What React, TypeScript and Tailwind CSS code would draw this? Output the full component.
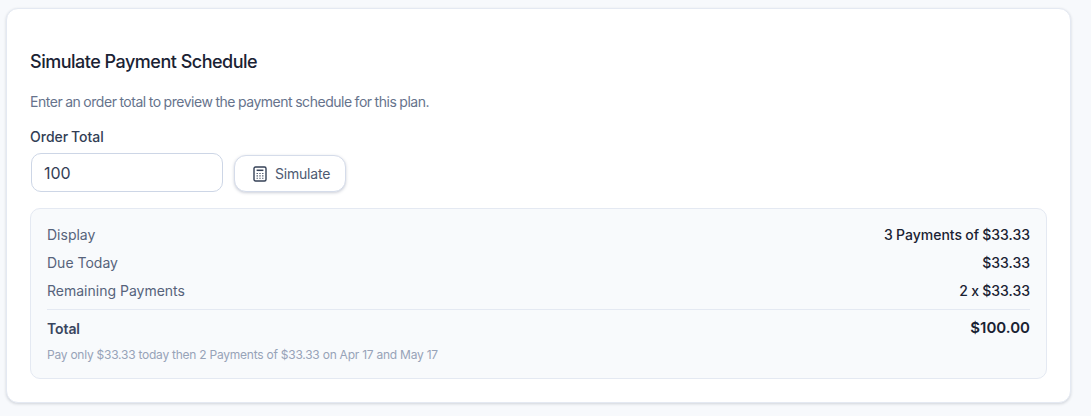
import React from 'react';

const rows = [
  { label: 'Display', value: '3 Payments of $33.33' },
  { label: 'Due Today', value: '$33.33' },
  { label: 'Remaining Payments', value: '2 x $33.33' },
];

const CalcIcon = () => (
  <svg className="h-[16px] w-[14px] text-[#344056]" viewBox="0 0 14 16" fill="none" stroke="currentColor">
    <rect x="1" y="1" width="12" height="14" rx="1.5" strokeWidth="1.4" />
    <path d="M3.6 4.3h6.8" strokeWidth="1.5" />
    <path d="M3.6 7.5h1.2M6.4 7.5h1.2M9.2 7.5h1.2M3.6 9.9h1.2M6.4 9.9h1.2M9.2 9.9h1.2M3.6 12.3h1.2M6.4 12.3h1.2M9.2 12.3h1.2" strokeWidth="1.1" />
  </svg>
);

const App: React.FC = () => {
  return (
    <div className="h-[416px] overflow-hidden bg-[#f7f9fc] pl-[6px] pr-[20px] pt-[8px] font-['Inter',sans-serif]">
      <div className="h-[395px] rounded-xl border border-[#e4e9f2] bg-white px-[23px] pt-[40px] shadow-[0_1px_3px_rgba(15,23,42,0.16)]">
        <h2 className="text-[18px] leading-[26px] font-medium tracking-[-0.5px] text-[#1a2233]">Simulate Payment Schedule</h2>
        <p className="mt-[17px] text-[14px] leading-[20px] tracking-[-0.47px] [word-spacing:-0.5px] text-[#66738c]">
          Enter an order total to preview the payment schedule for this plan.
        </p>
        <label className="mt-[15px] block text-[14px] leading-[20px] font-medium [word-spacing:-1px] text-[#323e55]">Order Total</label>
        <div className="mt-[6px] flex items-end gap-[11px] pl-px">
          <input
            readOnly
            value="100"
            className="h-[39px] w-[192px] rounded-[10px] border border-[#cdd6e6] bg-white px-3 text-[16px] text-[#344056] outline-none"
          />
          <button className="flex h-[37px] w-[112px] items-center gap-[8px] rounded-[12px] border border-[#d5dcea] bg-white pl-[18px] text-[14px] tracking-[-0.2px] text-[#4d5a72] shadow-[0_1px_3px_rgba(51,65,99,0.25)]">
            <CalcIcon />
            <span>Simulate</span>
          </button>
        </div>
        <div className="mt-[16px] h-[171px] rounded-[10px] border border-[#e4e9f2] bg-[#f8fafc] px-4 pt-[11px]">
          {rows.map((row) => (
            <div key={row.label} className="flex h-[28px] items-center justify-between text-[14px]">
              <span className="text-[#56637b]">{row.label}</span>
              <span className="font-medium [word-spacing:-0.5px] text-[#1a2233]">{row.value}</span>
            </div>
          ))}
          <div className="mt-[5px] flex h-[37px] items-center justify-between border-t border-[#e4e9f2] text-[14px] font-semibold">
            <span className="tracking-[-0.1px] text-[#3a4660]">Total</span>
            <span className="text-[15px] text-[#1a2233]">$100.00</span>
          </div>
          <p className="mt-px text-[12px] leading-[16px] tracking-[-0.24px] text-[#97a3b8]">
            Pay only $33.33 today then 2 Payments of $33.33 on Apr 17 and May 17
          </p>
        </div>
      </div>
    </div>
  );
};

export default App;
